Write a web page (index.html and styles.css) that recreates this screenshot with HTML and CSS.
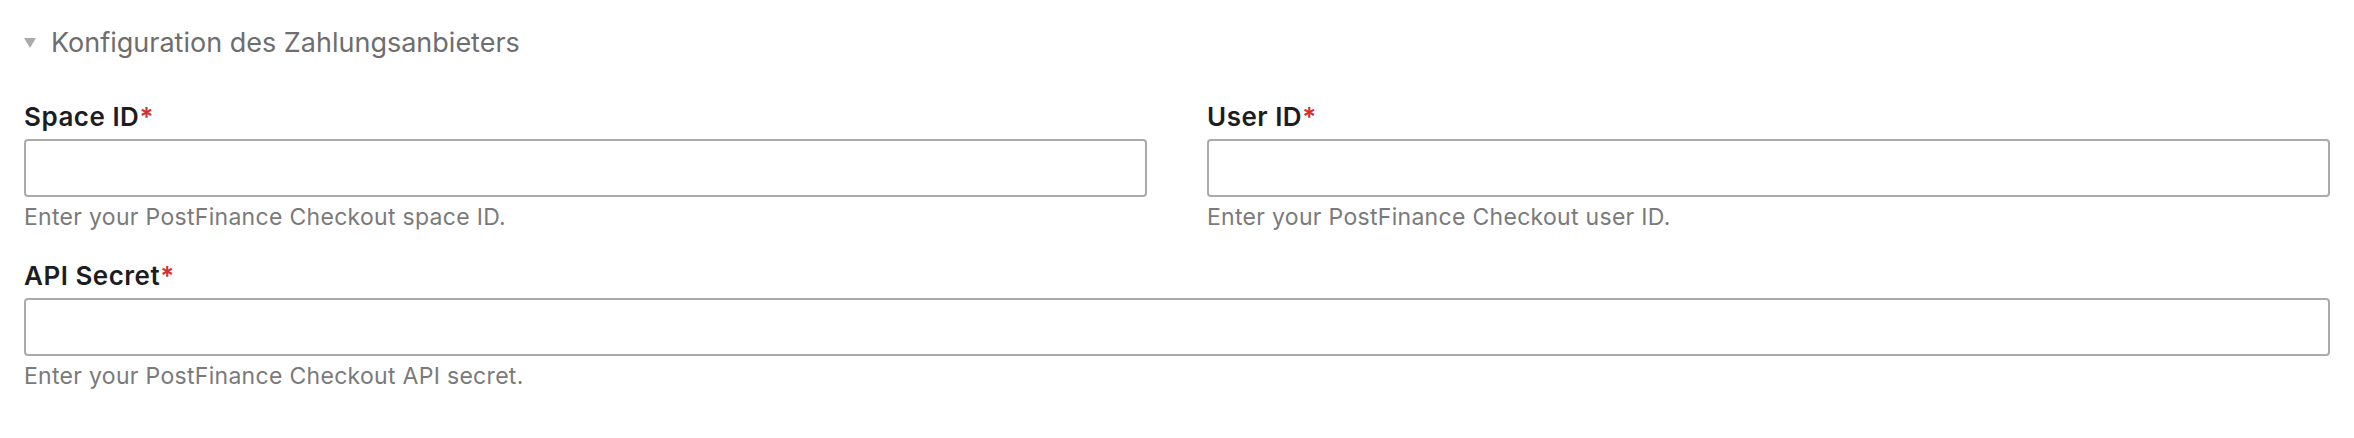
FILE: index.html
```html
<!DOCTYPE html>
<html lang="de">
<head>
<meta charset="utf-8">
<title>Konfiguration des Zahlungsanbieters</title>
<link rel="stylesheet" href="styles.css">
</head>
<body>
<section class="panel">
  <div class="summary">
    <svg class="caret" width="12" height="10" viewBox="0 0 12 10"><polygon points="0,0 12,0 6,10" fill="#ababab"/></svg>
    <span class="summary-title">Konfiguration des Zahlungsanbieters</span>
  </div>
  <div class="fields">
    <div class="field">
      <label class="label">Space ID<span class="req">*</span></label>
      <input class="input" type="text">
      <p class="help">Enter your PostFinance Checkout space ID.</p>
    </div>
    <div class="field">
      <label class="label">User ID<span class="req">*</span></label>
      <input class="input" type="text">
      <p class="help">Enter your PostFinance Checkout user ID.</p>
    </div>
    <div class="field field-wide">
      <label class="label">API Secret<span class="req">*</span></label>
      <input class="input" type="text">
      <p class="help">Enter your PostFinance Checkout API secret.</p>
    </div>
  </div>
</section>
</body>
</html>
```
FILE: styles.css
```css
html, body {
  margin: 0;
  padding: 0;
  background: #ffffff;
}
body {
  font-family: Inter, "Noto Sans", "Liberation Sans", sans-serif;
}
.panel {
  padding: 27px 24px 0 24px;
}
.summary {
  display: flex;
  align-items: center;
  gap: 15px;
  height: 32px;
}
.caret {
  display: block;
  flex: none;
}
.summary-title {
  font-size: 27px;
  line-height: 32px;
  color: #6e6e6e;
}
.fields {
  display: grid;
  grid-template-columns: 1fr 1fr;
  column-gap: 60px;
  row-gap: 30.5px;
  margin-top: 42.5px;
}
.field {
  display: flex;
  flex-direction: column;
}
.field-wide {
  grid-column: 1 / span 2;
}
.label {
  font-size: 26px;
  line-height: 30px;
  font-weight: 600;
  letter-spacing: 0.5px;
  color: #1d1d1f;
  margin-bottom: 7px;
}
.req {
  color: #d32f2f;
}
.input {
  box-sizing: border-box;
  height: 58px;
  width: 100%;
  border: 2px solid #ababab;
  border-radius: 4px;
  margin: 0;
  padding: 0 12px;
  background: #fff;
  font: inherit;
}
.help {
  margin: 7px 0 0 0;
  font-size: 23px;
  line-height: 27px;
  letter-spacing: 0.3px;
  color: #7a7a7a;
}
```
